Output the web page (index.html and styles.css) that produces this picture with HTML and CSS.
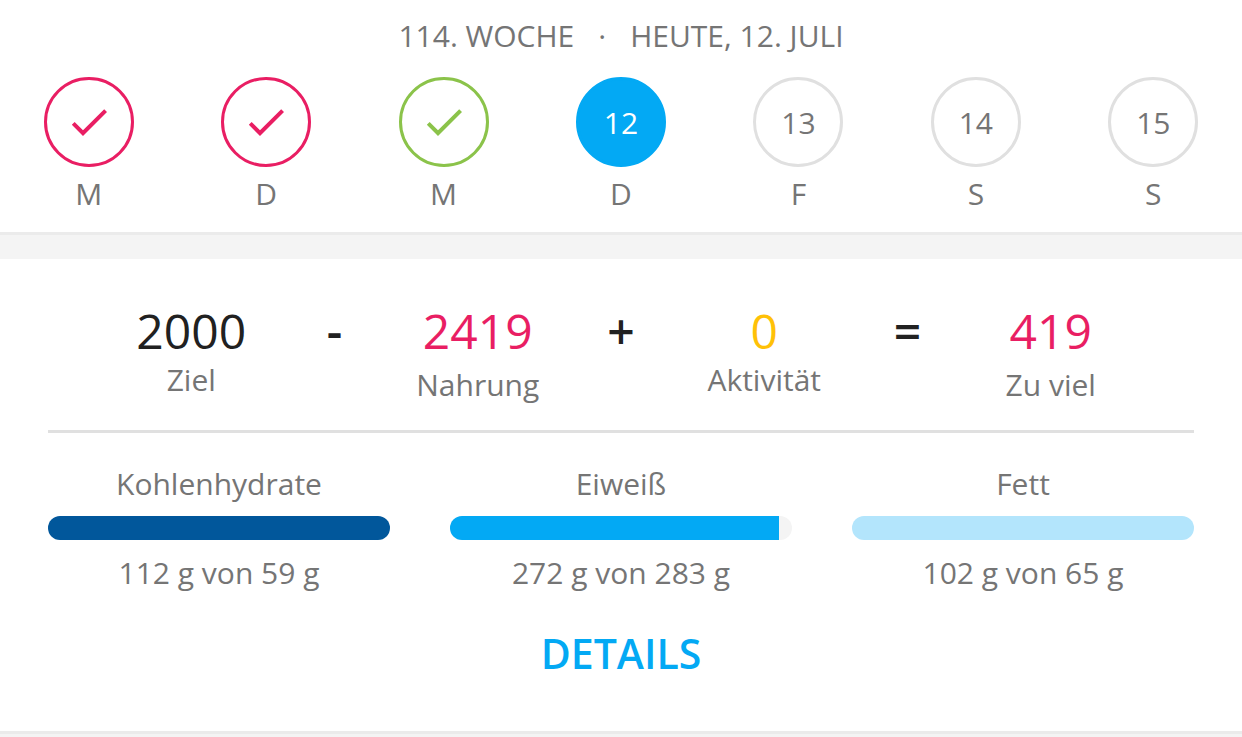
FILE: index.html
```html
<!DOCTYPE html>
<html lang="de">
<head>
<meta charset="utf-8">
<meta name="viewport" content="width=device-width, initial-scale=1">
<title>Tagebuch</title>
<link rel="stylesheet" href="styles.css">
</head>
<body>
<svg width="0" height="0" class="sprite" aria-hidden="true">
  <symbol id="check" viewBox="0 0 24 24"><path fill="currentColor" d="M9 16.17L4.83 12l-1.42 1.41L9 19 21 7l-1.41-1.41z"/></symbol>
</svg>
<header class="week">
  <h1 class="week-title"><span>114. WOCHE</span><span>·</span><span>HEUTE, 12. JULI</span></h1>
  <ol class="days">
    <li class="day"><button class="circle over" aria-label="Montag 9"><svg class="check"><use href="#check"/></svg></button><span>M</span></li>
    <li class="day"><button class="circle over" aria-label="Dienstag 10"><svg class="check"><use href="#check"/></svg></button><span>D</span></li>
    <li class="day"><button class="circle good" aria-label="Mittwoch 11"><svg class="check"><use href="#check"/></svg></button><span>M</span></li>
    <li class="day"><button class="circle today" aria-current="date"><span class="date">12</span></button><span>D</span></li>
    <li class="day"><button class="circle"><span class="date">13</span></button><span>F</span></li>
    <li class="day"><button class="circle"><span class="date">14</span></button><span>S</span></li>
    <li class="day"><button class="circle"><span class="date">15</span></button><span>S</span></li>
  </ol>
</header>
<main class="summary">
  <section class="equation">
    <div class="term"><span class="value">2000</span><span>Ziel</span></div>
    <span class="operator">-</span>
    <div class="term alert"><span class="value">2419</span><span>Nahrung</span></div>
    <span class="operator">+</span>
    <div class="term activity"><span class="value">0</span><span>Aktivität</span></div>
    <span class="operator">=</span>
    <div class="term alert"><span class="value">419</span><span>Zu viel</span></div>
  </section>
  <section class="macros">
    <div class="macro">
      <span id="carbs">Kohlenhydrate</span>
      <div class="bar" role="progressbar" aria-labelledby="carbs" aria-valuenow="100"><div class="fill carbs" style="width:100%"></div></div>
      <span>112 g von 59 g</span>
    </div>
    <div class="macro">
      <span id="protein">Eiweiß</span>
      <div class="bar" role="progressbar" aria-labelledby="protein" aria-valuenow="96"><div class="fill protein" style="width:96.1%"></div></div>
      <span>272 g von 283 g</span>
    </div>
    <div class="macro">
      <span id="fat">Fett</span>
      <div class="bar" role="progressbar" aria-labelledby="fat" aria-valuenow="100"><div class="fill fat" style="width:100%"></div></div>
      <span>102 g von 65 g</span>
    </div>
  </section>
  <button class="details">DETAILS</button>
</main>
</body>
</html>
```
FILE: styles.css
```css
* { box-sizing: border-box; }

body {
  margin: 0;
  background: #f4f4f4;
  color: #757575;
  font: 30px/36px "Open Sans", sans-serif;
}

button {
  padding: 0;
  border: 0;
  background: none;
  color: inherit;
  font: inherit;
  cursor: pointer;
}

.sprite { position: absolute; }

.week {
  padding: 18px 0 20px;
  background: #fff;
  border-bottom: 3px solid #ebebeb;
}

.week-title {
  display: flex;
  justify-content: center;
  gap: 24px;
  margin: 0 0 23px;
  font-size: 30px;
  font-weight: 400;
}

.days {
  display: grid;
  grid-template-columns: repeat(7, 1fr);
  margin: 0;
  padding: 0;
  list-style: none;
}

.day {
  display: flex;
  flex-direction: column;
  align-items: center;
  gap: 9px;
}

.circle {
  display: flex;
  align-items: center;
  justify-content: center;
  width: 90px;
  height: 90px;
  border: 3px solid #e0e0e0;
  border-radius: 50%;
}

.circle.over { border-color: #e91e63; color: #e91e63; }
.circle.good { border-color: #8bc34a; color: #8bc34a; }
.circle.today { border-color: #03a9f4; background: #03a9f4; color: #fff; }

.check { width: 48px; height: 48px; }
.date { padding-top: 2px; }

.summary {
  display: flex;
  flex-direction: column;
  margin-top: 24px;
  padding: 41px 48px 49px;
  background: #fff;
  border-bottom: 3px solid #ebebeb;
}

.equation {
  display: grid;
  grid-template-columns: repeat(7, 1fr);
  padding: 0 6.25% 27px;
  border-bottom: 3px solid #e0e0e0;
}

.term {
  display: flex;
  flex-direction: column;
  align-items: center;
  white-space: nowrap;
}

.value,
.operator {
  color: #212121;
  font-size: 48px;
  line-height: 62px;
}

.operator { font-weight: 600; text-align: center; }

.alert { gap: 5px; }
.alert .value { color: #e91e63; }
.activity .value { color: #ffc107; }

.macros {
  display: grid;
  grid-template-columns: repeat(3, 1fr);
  gap: 60px;
  padding: 33px 0;
}

.macro {
  display: flex;
  flex-direction: column;
  gap: 14px;
  text-align: center;
}

.macro span:last-child { padding-top: 1px; }

.bar {
  height: 24px;
  overflow: hidden;
  border-radius: 12px;
  background: #f4f4f4;
}

.fill { height: 100%; }
.fill.carbs { background: #01579b; }
.fill.protein { background: #03a9f4; }
.fill.fat { background: #b3e5fc; }

.details {
  align-self: center;
  color: #03a9f4;
  font-size: 41px;
  font-weight: 600;
  line-height: 58px;
}
```
